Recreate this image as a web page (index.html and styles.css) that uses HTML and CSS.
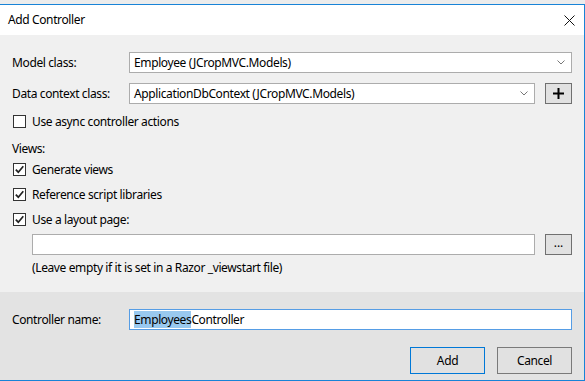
FILE: index.html
```html
<!DOCTYPE html>
<html>
<head>
  <title>Add Controller</title>
  <link rel="stylesheet" href="styles.css">
</head>
<body>
  <div class="window">
    <div class="titlebar">
      <span class="title">Add Controller</span>
      <svg class="close" width="11" height="11" viewBox="0 0 11 11">
        <path d="M0.5 0.5 L10.5 10.5 M10.5 0.5 L0.5 10.5" stroke="#111" stroke-width="1" fill="none"/>
      </svg>
    </div>

    <div class="content">
      <div class="form-row first">
        <label class="row-label">Model class:</label>
        <div class="combo wide">
          <span>Employee (JCropMVC.Models)</span>
          <svg class="chevron" width="8" height="5" viewBox="0 0 8 5"><path d="M0.5 0.5 L4 4 L7.5 0.5" stroke="#777" fill="none"/></svg>
        </div>
      </div>

      <div class="form-row">
        <label class="row-label">Data context class:</label>
        <div class="combo">
          <span>ApplicationDbContext (JCropMVC.Models)</span>
          <svg class="chevron" width="8" height="5" viewBox="0 0 8 5"><path d="M0.5 0.5 L4 4 L7.5 0.5" stroke="#777" fill="none"/></svg>
        </div>
        <button class="small-button plus" type="button">
          <svg width="11" height="11" viewBox="0 0 11 11"><path d="M5.5 0 V11 M0 5.5 H11" stroke="#000" stroke-width="2" fill="none"/></svg>
        </button>
      </div>

      <div class="check-row async">
        <span class="checkbox"></span>
        <span>Use async controller actions</span>
      </div>

      <div class="section-label">Views:</div>

      <div class="check-row views-first">
        <span class="checkbox checked"><svg width="11" height="11" viewBox="0 0 11 11"><path d="M1.8 5.6 L4.3 8.2 L9.3 2.2" stroke="#222" stroke-width="1.7" fill="none"/></svg></span>
        <span>Generate views</span>
      </div>
      <div class="check-row">
        <span class="checkbox checked"><svg width="11" height="11" viewBox="0 0 11 11"><path d="M1.8 5.6 L4.3 8.2 L9.3 2.2" stroke="#222" stroke-width="1.7" fill="none"/></svg></span>
        <span>Reference script libraries</span>
      </div>
      <div class="check-row">
        <span class="checkbox checked"><svg width="11" height="11" viewBox="0 0 11 11"><path d="M1.8 5.6 L4.3 8.2 L9.3 2.2" stroke="#222" stroke-width="1.7" fill="none"/></svg></span>
        <span>Use a layout page:</span>
      </div>

      <div class="layout-row">
        <div class="text-box layout-input"></div>
        <button class="small-button dots" type="button">...</button>
      </div>
      <div class="hint">(Leave empty if it is set in a Razor _viewstart file)</div>
    </div>

    <div class="bottom-panel">
      <div class="form-row">
        <label class="row-label">Controller name:</label>
        <div class="text-box focused"><span class="selected">Employees</span>Controller</div>
      </div>
      <div class="buttons">
        <button class="dialog-button default" type="button">Add</button>
        <button class="dialog-button" type="button">Cancel</button>
      </div>
    </div>
  </div>
</body>
</html>
```

FILE: styles.css
```css
body {
  margin: 0;
  padding: 4px 0 0;
  background-color: #ececec;
  font-family: "Noto Sans", "Liberation Sans", sans-serif;
  font-size: 12px;
  letter-spacing: -0.38px;
  color: #000;
  overflow: hidden;
}

.window {
  width: 584px;
  height: 375px;
  display: flex;
  flex-direction: column;
  border-top: 1px solid #1883d7;
  border-right: 1px solid #1883d7;
  border-bottom: 1px solid #1883d7;
  background-color: #f0f0f0;
}

.titlebar {
  height: 30px;
  flex: none;
  display: flex;
  align-items: center;
  justify-content: space-between;
  padding: 0 9px 0 8px;
  background-color: #fff;
}

.title {
  font-size: 12px;
  margin-top: -2px;
}

.content {
  flex: 1;
  padding: 17px 12px 0 12px;
}

.form-row {
  display: flex;
  align-items: center;
  height: 21px;
  margin-top: 10px;
}

.form-row.first {
  margin-top: 0;
}

.row-label {
  width: 117px;
  flex: none;
}

.combo,
.text-box {
  box-sizing: border-box;
  height: 21px;
  display: flex;
  align-items: center;
  padding: 0 4px;
  background-color: #fff;
  border: 1px solid #acacac;
}

.combo {
  width: 406px;
  justify-content: space-between;
  padding-right: 6px;
}

.combo.wide {
  width: 443px;
}

.small-button {
  box-sizing: border-box;
  width: 27px;
  height: 21px;
  margin-left: 10px;
  padding: 0;
  display: flex;
  align-items: center;
  justify-content: center;
  background-color: #e1e1e1;
  border: 1px solid #707070;
  font-family: inherit;
  font-size: 12px;
}

.check-row {
  display: flex;
  align-items: center;
  height: 13px;
  margin-top: 12px;
  margin-left: 1px;
}

.check-row.async {
  margin-top: 11px;
}

.check-row.views-first {
  margin-top: 6px;
}

.checkbox {
  box-sizing: border-box;
  width: 13px;
  height: 13px;
  margin-right: 6px;
  display: flex;
  align-items: center;
  justify-content: center;
  background-color: #fff;
  border: 1px solid #333;
}

.section-label {
  height: 16px;
  line-height: 16px;
  margin-top: 13px;
}

.layout-row {
  display: flex;
  margin-top: 8px;
  margin-left: 20px;
}

.layout-input {
  width: 504px;
}

.dots {
  padding-bottom: 4px;
}

.hint {
  margin-top: 5px;
  margin-left: 20px;
  height: 16px;
  line-height: 16px;
}

.bottom-panel {
  flex: none;
  height: 88px;
  box-sizing: border-box;
  padding: 17px 12px 6px 12px;
  background-color: #e3e3e3;
}

.bottom-panel .form-row {
  margin-top: 0;
}

.text-box.focused {
  width: 443px;
  border-color: #569de5;
}

.selected {
  background-color: #99c9ef;
}

.buttons {
  display: flex;
  justify-content: flex-end;
  gap: 12px;
  margin-top: 17px;
}

.dialog-button {
  box-sizing: border-box;
  width: 75px;
  height: 27px;
  background-color: #e1e1e1;
  border: 1px solid #7a7a7a;
  font-family: inherit;
  font-size: 12px;
  letter-spacing: -0.38px;
  color: #000;
}

.dialog-button.default {
  border-color: #0078d7;
}
```
